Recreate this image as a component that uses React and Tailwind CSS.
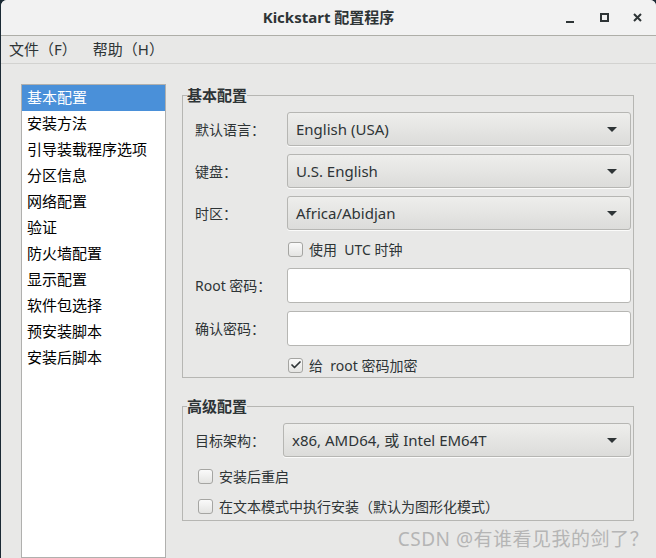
import { Check } from 'lucide-react'

const cjk = { fontFamily: '"Noto Sans", "Noto Sans CJK SC", sans-serif' }

const items = ['基本配置', '安装方法', '引导装载程序选项', '分区信息', '网络配置', '验证', '防火墙配置', '显示配置', '软件包选择', '预安装脚本', '安装后脚本']

function Combo({ value, className = '' }) {
  return (
    <div className={`flex h-[34px] items-center justify-between rounded-[3px] border border-[#b6b6b3] bg-gradient-to-b from-[#eeeeec] to-[#dcdcda] pl-2 pr-[13px] text-[15px] text-[#2e3436] shadow-[0_1px_0_rgba(255,255,255,0.8)] ${className}`}>
      <span>{value}</span>
      <span className="h-0 w-0 border-x-[5px] border-t-[5px] border-x-transparent border-t-[#2e3436]" />
    </div>
  )
}

function Box({ checked }) {
  return (
    <span className="flex h-[15px] w-[15px] items-center justify-center rounded-[3px] border border-[#a5a5a2] bg-gradient-to-b from-[#fafafa] to-[#e4e4e2]">
      {checked && <Check size={12} strokeWidth={3.5} className="text-[#2e3436]" />}
    </span>
  )
}

function Entry() {
  return <div className="h-[35px] rounded-[3px] border border-[#b6b6b3] bg-white" />
}

export default function App() {
  return (
    <div className="h-[558px] w-[656px] overflow-hidden bg-[#1b2a35] pl-px" style={cjk}>
      <div className="relative flex h-full flex-col overflow-hidden rounded-t-[6px] bg-[#e8e8e7]">
        <div className="flex h-[36px] shrink-0 items-center border-b border-[#aeaea8] bg-[#f2f2f2]">
          <div className="flex-1 pl-[93px] text-center text-[15px] font-bold text-[#2e3436]">Kickstart 配置程序</div>
          <div className="flex w-[93px] items-center justify-end pr-[14px] text-[#2e3436]">
            <span className="mt-[8px] h-[2px] w-[8px] bg-[#2e3436]" />
            <span className="ml-[26px] h-[9px] w-[9px] border-2 border-[#2e3436]" />
            <svg className="ml-[24px]" width="9" height="9" viewBox="0 0 9 9">
              <path d="M1 1L8 8M8 1L1 8" stroke="#2e3436" strokeWidth="2" />
            </svg>
          </div>
        </div>
        <div className="flex h-[28px] shrink-0 items-center gap-[16px] border-b border-[#d2d2d0] pl-[8px] text-[15px] text-[#2e3436]">
          <span>文件（F）</span>
          <span>帮助（H）</span>
        </div>
        <div className="flex flex-1 gap-[16px] pl-[20px] pt-[20px]">
          <div className="w-[145px] shrink-0 border border-[#b0b0ae] bg-white pt-0 text-[15px] text-black">
            {items.map((t, i) => (
              <div key={t} className={`h-[26px] pl-[5px] leading-[25px] ${i === 0 ? 'bg-[#4a90d9] text-white' : ''}`}>{t}</div>
            ))}
          </div>
          <div className="flex w-[452px] flex-col pt-[1px]">
            <fieldset className="border border-[#b6b6b3] pb-[1px] pl-[12px] pr-[2px]">
              <legend className="ml-[-8px] text-[15px] font-bold leading-[20px] text-[#2e3436]">基本配置</legend>
              <div className="grid grid-cols-[92px_1fr] items-center gap-y-[8px] pt-[7px] text-[14px] text-[#2e3436]">
                <span>默认语言：</span>
                <Combo value="English (USA)" />
                <span>键盘：</span>
                <Combo value="U.S. English" />
                <span>时区：</span>
                <Combo value="Africa/Abidjan" />
                <span />
                <div className="flex h-[22px] items-center gap-[6px] pl-[1px]">
                  <Box />
                  <span>使用&nbsp; UTC 时钟</span>
                </div>
                <span>Root 密码：</span>
                <Entry />
                <span>确认密码：</span>
                <Entry />
                <span />
                <div className="flex h-[22px] items-center gap-[6px] pl-[1px]">
                  <Box checked />
                  <span>给&nbsp; root 密码加密</span>
                </div>
              </div>
            </fieldset>
            <fieldset className="mt-[18px] border border-[#b6b6b3] pb-0 pl-[12px] pr-[2px]">
              <legend className="ml-[-8px] text-[15px] font-bold leading-[20px] text-[#2e3436]">高级配置</legend>
              <div className="flex flex-col text-[14px] text-[#2e3436]">
                <div className="mt-[7px] grid grid-cols-[88px_1fr] items-center">
                  <span>目标架构：</span>
                  <Combo value="x86, AMD64, 或  Intel EM64T" />
                </div>
                <div className="mt-[5px] flex h-[28px] items-center gap-[6px] pl-[3px]">
                  <Box />
                  <span>安装后重启</span>
                </div>
                <div className="mt-[2px] flex h-[28px] items-center gap-[6px] pl-[3px]">
                  <Box />
                  <span>在文本模式中执行安装（默认为图形化模式）</span>
                </div>
              </div>
            </fieldset>
          </div>
        </div>
        <div className="absolute bottom-[5px] right-[7px] text-[19px] tracking-[0.5px] text-[#b5b5b5]">CSDN @有谁看见我的剑了？</div>
      </div>
    </div>
  )
}
